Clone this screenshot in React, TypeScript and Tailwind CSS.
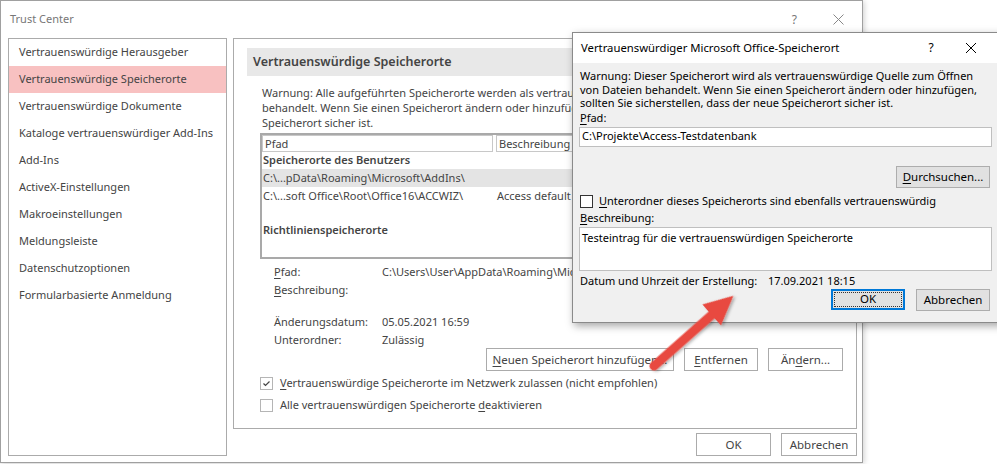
import { useState } from 'react'

// --- Office-ish primitives ---

const Acc = ({ children }: { children: string }) => <span className="underline underline-offset-2">{children}</span>

interface BtnProps {
  children: React.ReactNode
  className?: string
}

const OfficeButton = ({ children, className = '' }: BtnProps) => (
  <div
    className={`h-[23px] flex items-center justify-center border border-[#ababab] bg-white text-[11.5px] text-[#444] ${className}`}
  >
    {children}
  </div>
)

const DialogButton = ({ children, className = '' }: BtnProps) => (
  <div
    className={`h-[22px] flex items-center justify-center border border-[#adadad] bg-[#e1e1e1] text-[11.5px] text-black ${className}`}
  >
    {children}
  </div>
)

const CheckBox = ({ checked }: { checked: boolean }) => (
  <span className="w-[13px] h-[13px] border border-[#b5b5b5] bg-white flex items-center justify-center shrink-0">
    {checked && (
      <svg width="9" height="9" viewBox="0 0 9 9">
        <path d="M1.5 4.5 L3.5 6.5 L7.5 2.5" fill="none" stroke="#444" strokeWidth="1.2" />
      </svg>
    )}
  </span>
)

// --- Sidebar ---

const navItems = [
  'Vertrauenswürdige Herausgeber',
  'Vertrauenswürdige Speicherorte',
  'Vertrauenswürdige Dokumente',
  'Kataloge vertrauenswürdiger Add-Ins',
  'Add-Ins',
  'ActiveX-Einstellungen',
  'Makroeinstellungen',
  'Meldungsleiste',
  'Datenschutzoptionen',
  'Formularbasierte Anmeldung',
]

const Sidebar = () => {
  const [active] = useState(1)
  return (
    <div className="w-[219px] h-[418px] border border-[#ababab] bg-white shrink-0">
      {navItems.map((item, i) => (
        <div
          key={item}
          className={`h-[27px] flex items-center pl-[10px] text-[11px] text-[#444] whitespace-nowrap ${i === active ? 'bg-[#f8c1c1]' : ''}`}
        >
          {item}
        </div>
      ))}
    </div>
  )
}

// --- Trusted locations panel ---

const LocationsPanel = () => (
  <div className="w-[624px] h-[391px] border border-[#ababab] bg-white overflow-hidden pt-[9px] pl-[13px] text-[11px] text-[#444]">
    <div className="w-[596px] h-[28px] bg-[#e8e8e8] flex items-center pl-[6px] font-semibold text-[12.5px] text-[#444]">
      Vertrauenswürdige Speicherorte
    </div>

    <div className="pl-[15px] pt-[9px] leading-[15px] whitespace-nowrap">
      <div>Warnung: Alle aufgeführten Speicherorte werden als vertrauenswürdige Quellen zum Öffnen von Dateien</div>
      <div>behandelt. Wenn Sie einen Speicherort ändern oder hinzufügen, sollten Sie sicherstellen, dass der neue</div>
      <div>Speicherort sicher ist.</div>
    </div>

    {/* table */}
    <div className="ml-[13px] mt-[3px] w-[583px] h-[126px] border-2 border-[#a9a9a9] whitespace-nowrap">
      <div className="flex gap-[3px] h-[17px]">
        <div className="w-[231px] border border-[#c8c8c8] pl-[2px] leading-[15px]">Pfad</div>
        <div className="w-[120px] border border-[#c8c8c8] pl-[2px] leading-[15px]">Beschreibung</div>
      </div>
      <div className="h-[17px] flex items-center pl-[1px] font-semibold">Speicherorte des Benutzers</div>
      <div className="h-[18px] flex items-center pl-[1px] bg-[#e4e4e4]">C:\...pData\Roaming\Microsoft\AddIns\</div>
      <div className="h-[18px] flex items-center pl-[1px]">
        <span className="w-[234px]">C:\...soft Office\Root\Office16\ACCWIZ\</span>
        <span>Access default</span>
      </div>
      <div className="h-[34px] flex items-end pl-[1px] pb-[1px] font-semibold">Richtlinienspeicherorte</div>
    </div>

    {/* details */}
    <div className="pl-[27px] pt-[4px] leading-[18px] whitespace-nowrap">
      <div className="flex">
        <span className="w-[108px]"><Acc>P</Acc>fad:</span>
        <span>C:\Users\User\AppData\Roaming\Microsoft\AddIns\</span>
      </div>
      <div className="flex">
        <span className="w-[108px]"><Acc>B</Acc>eschreibung:</span>
      </div>
      <div className="h-[14px]" />
      <div className="flex">
        <span className="w-[108px]">Änderungsdatum:</span>
        <span>05.05.2021 16:59</span>
      </div>
      <div className="flex">
        <span className="w-[108px]">Unterordner:</span>
        <span>Zulässig</span>
      </div>
    </div>

    <div className="flex gap-[10px] pl-[239px] -mt-[1px]">
      <OfficeButton className="w-[188px]">
        <span><Acc>N</Acc>euen Speicherort hinzufügen...</span>
      </OfficeButton>
      <OfficeButton className="w-[74px]">
        <span><Acc>E</Acc>ntfernen</span>
      </OfficeButton>
      <OfficeButton className="w-[75px]">
        <span>Än<Acc>d</Acc>ern...</span>
      </OfficeButton>
    </div>

    <div className="pl-[13px] pt-[6px] flex flex-col gap-[9px]">
      <div className="flex items-center gap-[7px] h-[13px]">
        <CheckBox checked />
        <span><Acc>V</Acc>ertrauenswürdige Speicherorte im Netzwerk zulassen (nicht empfohlen)</span>
      </div>
      <div className="flex items-center gap-[7px] h-[13px]">
        <CheckBox checked={false} />
        <span>Alle vertrauenswürdigen Speicherorte <Acc>d</Acc>eaktivieren</span>
      </div>
    </div>
  </div>
)

// --- Modal dialog ---

const LocationDialog = () => (
  <div className="absolute left-[572px] top-[32px] w-[432px] h-[291px] border border-[#8a8a8a] bg-[#f0f0f0] shadow-[2px_3px_8px_rgba(0,0,0,0.35)] text-[11px] text-black flex flex-col whitespace-nowrap">
    <div className="h-[30px] bg-white flex items-center pl-[8px] shrink-0">
      <span className="flex-1 text-[11.3px]">Vertrauenswürdiger Microsoft Office-Speicherort</span>
      <span className="w-[20px] text-center text-[12px] mr-[24px]">?</span>
      <svg width="12" height="12" viewBox="0 0 12 12" className="mr-[26px]">
        <path d="M1 1 L11 11 M11 1 L1 11" stroke="#000" strokeWidth="1" />
      </svg>
    </div>

    <div className="pl-[7px] pr-[9px] flex flex-col">
      <div className="pt-[6px] leading-[13.5px]">
        <div>Warnung: Dieser Speicherort wird als vertrauenswürdige Quelle zum Öffnen</div>
        <div>von Dateien behandelt. Wenn Sie einen Speicherort ändern oder hinzufügen,</div>
        <div>sollten Sie sicherstellen, dass der neue Speicherort sicher ist.</div>
      </div>
      <div className="mt-[1px] leading-[14px]"><Acc>P</Acc>fad:</div>
      <div className="mt-[2px] h-[20px] w-[413px] -ml-[1px] border border-[#bfbfbf] bg-white flex items-center pl-[2px]">
        C:\Projekte\Access-Testdatenbank
      </div>
      <div className="flex justify-end mt-[19px] w-[410px]">
        <DialogButton className="w-[94px] h-[21px]">
          <span><Acc>D</Acc>urchsuchen...</span>
        </DialogButton>
      </div>
      <div className="flex items-center gap-[6px] mt-[7px] h-[14px]">
        <span className="w-[13px] h-[13px] border border-[#333] bg-white shrink-0" />
        <span><Acc>U</Acc>nterordner dieses Speicherorts sind ebenfalls vertrauenswürdig</span>
      </div>
      <div className="mt-[2px] leading-[14px]"><Acc>B</Acc>eschreibung:</div>
      <div className="mt-[2px] h-[44px] w-[413px] -ml-[1px] border border-[#bfbfbf] bg-white pl-[2px] pt-[3px] leading-[14px]">
        Testeintrag für die vertrauenswürdigen Speicherorte
      </div>
      <div className="flex mt-[3px] leading-[14px]">
        <span className="w-[188px]">Datum und Uhrzeit der Erstellung:</span>
        <span>17.09.2021 18:15</span>
      </div>
      <div className="flex justify-end gap-[11px] mt-[1px] w-[410px]">
        <div className="w-[74px] h-[21px] border-2 border-[#0078d7] bg-[#e1e1e1] p-[1px] text-[11.5px]">
          <div className="w-full h-full border border-dotted border-[#333] flex items-center justify-center">OK</div>
        </div>
        <DialogButton className="w-[74px] h-[21px]">Abbrechen</DialogButton>
      </div>
    </div>
  </div>
)

// --- Arrow annotation ---

const Arrow = () => (
  <svg className="absolute left-0 top-0 pointer-events-none" width="997" height="464" viewBox="0 0 997 464">
    <defs>
      <filter id="arrowShadow" x="-20%" y="-20%" width="140%" height="140%">
        <feDropShadow dx="1" dy="2" stdDeviation="1.5" floodColor="#000" floodOpacity="0.3" />
      </filter>
    </defs>
    <g transform="translate(654 366) rotate(-41.5)" filter="url(#arrowShadow)">
      <path
        d="M0 -4.5 L77 -4.5 L77 -14 L106 0 L77 14 L77 4.5 L0 4.5 A4.5 4.5 0 0 1 0 -4.5 Z"
        fill="#e8493f"
      />
    </g>
  </svg>
)

// --- Page ---

const App = () => (
  <div className="relative w-[997px] h-[464px] bg-white overflow-hidden font-['Segoe_UI','Noto_Sans',sans-serif]">
    <div className="w-[863px] h-[463px] border border-[#a0a0a0] bg-white flex flex-col shadow-[1px_1px_6px_rgba(0,0,0,0.2)]">
      {/* title bar */}
      <div className="h-[37px] flex items-center pl-[9px] shrink-0">
        <span className="flex-1 text-[11px] text-[#777]">Trust Center</span>
        <span className="text-[12px] text-[#777] mr-[36px]">?</span>
        <svg width="11" height="11" viewBox="0 0 11 11" className="mr-[18px]">
          <path d="M0.5 0.5 L10.5 10.5 M10.5 0.5 L0.5 10.5" stroke="#888" strokeWidth="1" />
        </svg>
      </div>

      {/* body */}
      <div className="flex gap-[6px] pl-[7px]">
        <Sidebar />
        <div className="flex flex-col">
          <LocationsPanel />
          <div className="flex justify-end gap-[10px] mt-[4px]">
            <OfficeButton className="w-[75px]">OK</OfficeButton>
            <OfficeButton className="w-[76px]">Abbrechen</OfficeButton>
          </div>
        </div>
      </div>
    </div>

    <LocationDialog />
    <Arrow />
  </div>
)

export default App
